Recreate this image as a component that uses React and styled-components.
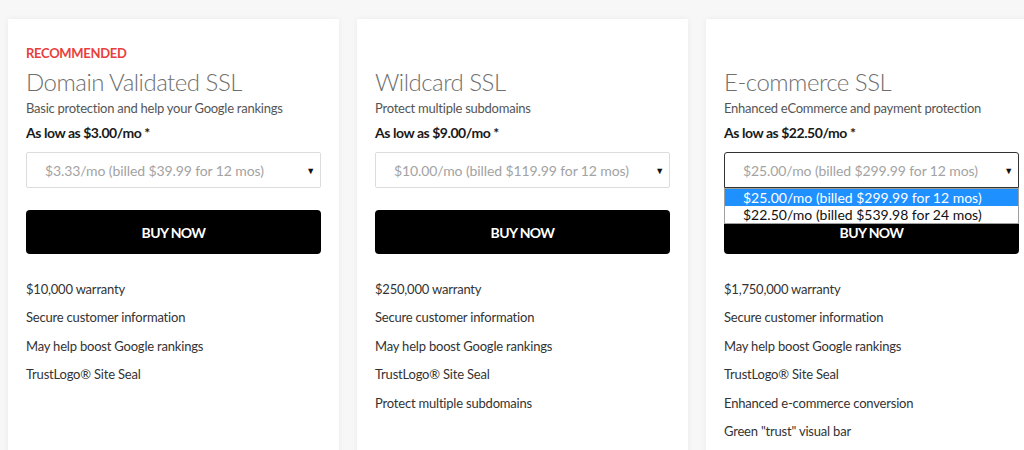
import React from 'react'
import styled, { createGlobalStyle } from 'styled-components';

const GlobalStyle = createGlobalStyle`
    html, body {
        margin: 0;
        padding: 0;
        background: #f7f7f7;
        font-family: Lato, "Open Sans", Arial, sans-serif;
        overflow: hidden;
    }
`;

const Pagina = styled.div`
    width: 1024px;
    height: 450px;
    overflow: hidden;
    box-sizing: border-box;
    padding: 19px 0 0 8px;
`;

const Linha = styled.div`
    display: flex;
    gap: 18px;
    align-items: flex-start;
`;

const Cartao = styled.div`
    flex: 0 0 331px;
    height: 460px;
    box-sizing: border-box;
    background: #fff;
    padding: 26px 18px 0 18px;
    box-shadow: 0 0 6px rgba(0, 0, 0, 0.06);
`;

const Selo = styled.div`
    font-size: 13px;
    line-height: 16px;
    font-weight: 700;
    letter-spacing: -0.3px;
    color: #e8403c;
    height: 16px;
    visibility: ${({visivel}) => (visivel ? 'visible' : 'hidden')};
`;

const Titulo = styled.h2`
    margin: 7px 0 0 0;
    font-size: 24px;
    line-height: 28px;
    font-weight: 300;
    letter-spacing: -0.5px;
    color: #6f6f6f;
`;

const Subtitulo = styled.p`
    margin: 4px 0 0 0;
    font-size: 13px;
    line-height: 16px;
    letter-spacing: -0.25px;
    color: #555;
`;

const Preco = styled.p`
    margin: 9px 0 0 0;
    font-size: 14px;
    line-height: 16px;
    font-weight: 700;
    letter-spacing: -0.45px;
    color: #1a1a1a;
`;

const SeletorCaixa = styled.div`
    position: relative;
    margin-top: 11px;
`;

const Seletor = styled.div`
    height: 36px;
    box-sizing: border-box;
    border: 1px solid ${({aberto}) => (aberto ? '#333' : '#dcdcdc')};
    border-radius: ${({aberto}) => (aberto ? '3px 3px 0 0' : '2px')};
    display: flex;
    align-items: center;
    justify-content: space-between;
    padding: 0 5px 0 18px;
    font-size: 14px;
    letter-spacing: -0.1px;
    color: #a3a3a3;
`;

const Seta = styled.span`
    font-size: 9px;
    color: #111;
`;

const Lista = styled.div`
    position: absolute;
    top: 36px;
    left: 0;
    right: 0;
    background: #fff;
    border: 1px solid #a0a0a0;
    z-index: 2;
`;

const Opcao = styled.div`
    height: 17px;
    line-height: 17px;
    padding-left: 18px;
    font-size: 14px;
    background: ${({ativo}) => (ativo ? '#1e90ff' : '#fff')};
    color: ${({ativo}) => (ativo ? '#fff' : '#111')};
`;

const Botao = styled.button`
    display: block;
    width: 100%;
    height: 44px;
    margin-top: 22px;
    border: none;
    border-radius: 4px;
    background: #000;
    color: #fff;
    font-family: Lato, Arial, sans-serif;
    font-size: 14px;
    font-weight: 700;
    letter-spacing: -0.6px;
    cursor: pointer;
`;

const Recursos = styled.ul`
    list-style: none;
    margin: 21px 0 0 0;
    padding: 0;
`;

const Recurso = styled.li`
    font-size: 13px;
    line-height: 28.4px;
    letter-spacing: -0.2px;
    color: #333;
`;

const produtos = [
    {
        selo: true,
        titulo: 'Domain Validated SSL',
        sub: 'Basic protection and help your Google rankings',
        preco: 'As low as $3.00/mo *',
        opcao: '$3.33/mo (billed $39.99 for 12 mos)',
        recursos: ['$10,000 warranty', 'Secure customer information', 'May help boost Google rankings', 'TrustLogo® Site Seal'],
    },
    {
        titulo: 'Wildcard SSL',
        sub: 'Protect multiple subdomains',
        preco: 'As low as $9.00/mo *',
        opcao: '$10.00/mo (billed $119.99 for 12 mos)',
        recursos: ['$250,000 warranty', 'Secure customer information', 'May help boost Google rankings', 'TrustLogo® Site Seal', 'Protect multiple subdomains'],
    },
    {
        titulo: 'E-commerce SSL',
        sub: 'Enhanced eCommerce and payment protection',
        preco: 'As low as $22.50/mo *',
        opcao: '$25.00/mo (billed $299.99 for 12 mos)',
        aberto: ['$25.00/mo (billed $299.99 for 12 mos)', '$22.50/mo (billed $539.98 for 24 mos)'],
        recursos: ['$1,750,000 warranty', 'Secure customer information', 'May help boost Google rankings', 'TrustLogo® Site Seal', 'Enhanced e-commerce conversion', 'Green "trust" visual bar'],
    },
];

const App = () => {
    return (
        <Pagina>
            <GlobalStyle />
            <Linha>
                {produtos.map((p) => (
                    <Cartao key={p.titulo}>
                        <Selo visivel={p.selo}>RECOMMENDED</Selo>
                        <Titulo>{p.titulo}</Titulo>
                        <Subtitulo>{p.sub}</Subtitulo>
                        <Preco>{p.preco}</Preco>
                        <SeletorCaixa>
                            <Seletor aberto={!!p.aberto}>
                                <span>{p.opcao}</span>
                                <Seta>▼</Seta>
                            </Seletor>
                            {p.aberto && (
                                <Lista>
                                    {p.aberto.map((o, i) => (
                                        <Opcao key={o} ativo={i === 0}>{o}</Opcao>
                                    ))}
                                </Lista>
                            )}
                        </SeletorCaixa>
                        <Botao>BUY NOW</Botao>
                        <Recursos>
                            {p.recursos.map((r) => (
                                <Recurso key={r}>{r}</Recurso>
                            ))}
                        </Recursos>
                    </Cartao>
                ))}
            </Linha>
        </Pagina>
    )
}

export default App
